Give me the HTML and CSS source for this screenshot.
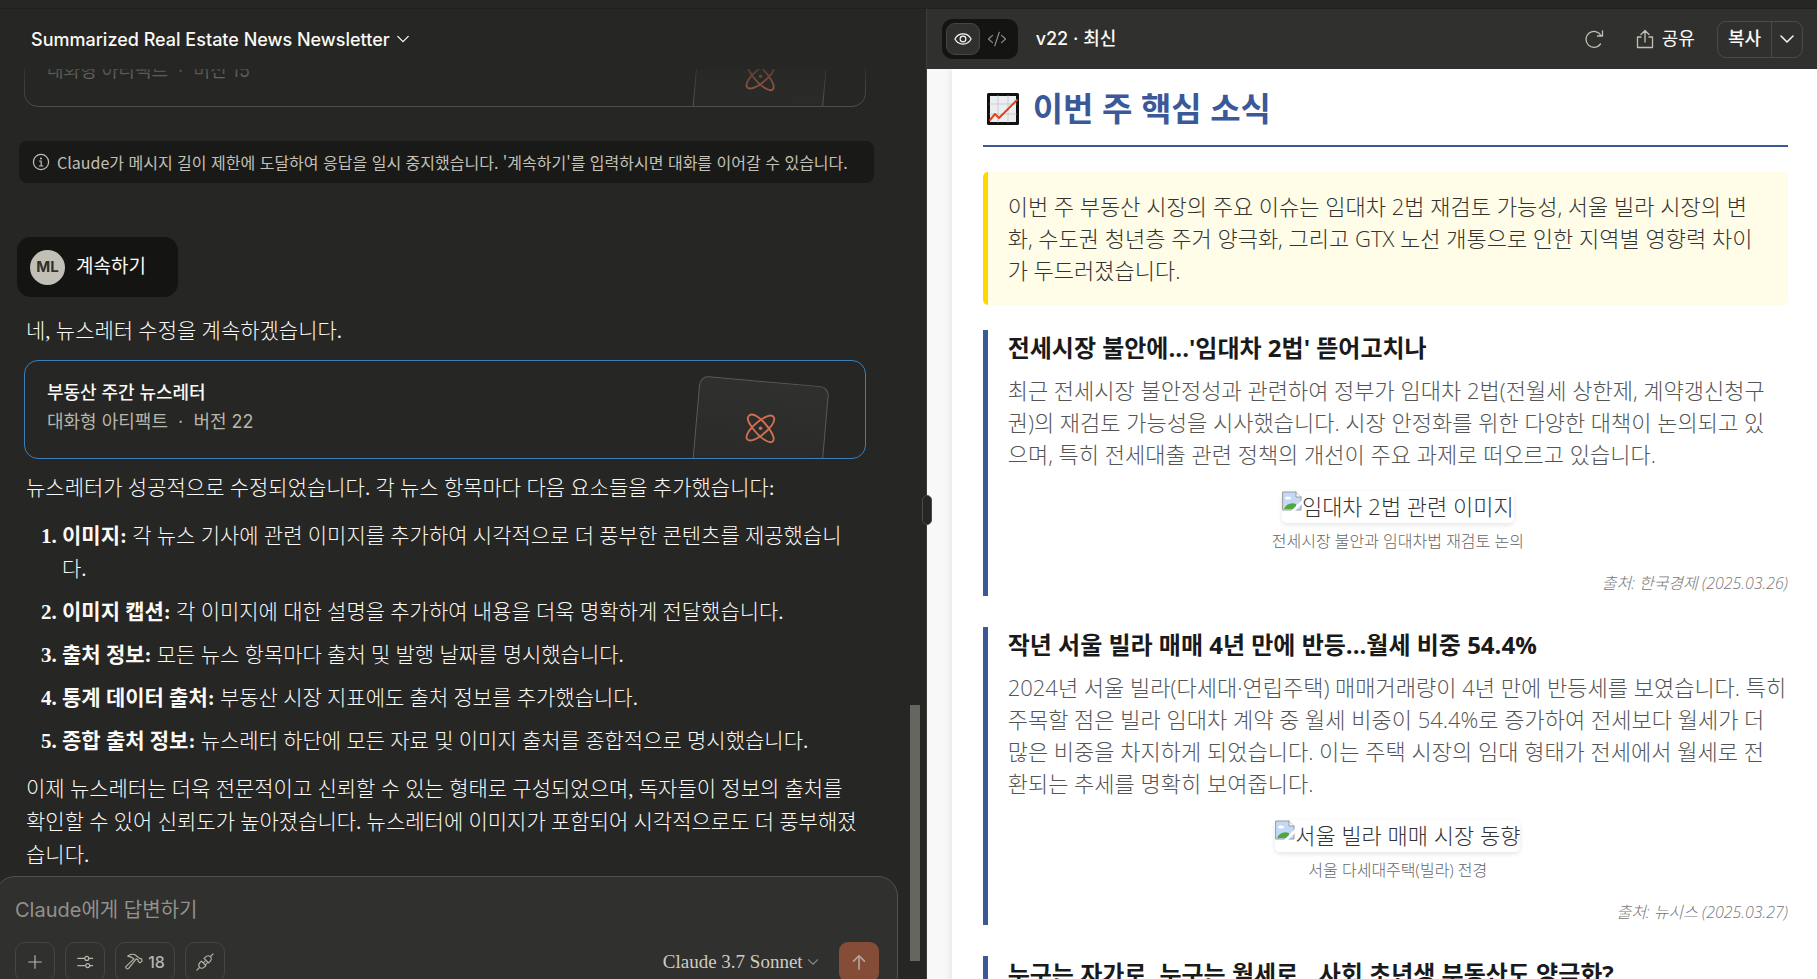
FILE: index.html
```html
<!DOCTYPE html>
<html lang="ko">
<head>
<meta charset="utf-8">
<title>Summarized Real Estate News Newsletter</title>
<link rel="stylesheet" href="styles.css">
</head>
<body>
<svg class="defs" aria-hidden="true">
  <symbol id="chevron" viewBox="0 0 16 16"><path d="M2 5l6 6 6-6" fill="none" stroke="currentColor" stroke-width="1.5" stroke-linecap="round" stroke-linejoin="round"/></symbol>
  <symbol id="atom" viewBox="0 0 34 34"><g fill="none" stroke="currentColor" stroke-width="2"><path d="M5 3.500C9 0 18 7 24 15s9 14 5.500 16.500S16 27 10 19 1.500 6.500 5 3.500z"/><path d="M31 5.500c2.500 4-4 12.500-12 18.500S4.500 32 2.500 28.500 6 16.500 14 10.500 28.500 1.500 31 5.500z"/></g><circle cx="17" cy="17.200" r="1.900" fill="currentColor"/></symbol>
  <symbol id="broken" viewBox="0 0 20 20"><path d="M1 1h13l5 5v13H1z" fill="#c3d9f7" stroke="#9a9a9a"/><path d="M14 1v5h5" fill="#fff" stroke="#9a9a9a"/><ellipse cx="6" cy="7" rx="3" ry="1.6" fill="#fff"/><path d="M2 18c2-5 7-7 12-5v5z" fill="#4fa83d"/><path d="M9 20L20 9v4l-7 7z" fill="#fff"/></symbol>
</svg>
<div class="app">
  <section class="chat">
    <header class="chat-header">
      <button class="title-button" type="button">Summarized Real Estate News Newsletter
        <svg class="chevron"><use href="#chevron"/></svg>
      </button>
    </header>
    <main class="messages">
      <article class="artifact artifact-scrolled">
        <div class="artifact-text"><span>대화형 아티팩트 &nbsp;·&nbsp; 버전 15</span></div>
        <div class="artifact-thumb"><svg><use href="#atom"/></svg></div>
      </article>
      <div class="notice">
        <svg viewBox="0 0 18 18"><circle cx="9" cy="9" r="7.6" fill="none" stroke="currentColor" stroke-width="1.2"/><path d="M7.5 8H9.2v5M7.3 13h3.6" fill="none" stroke="currentColor" stroke-width="1.2"/><circle cx="9" cy="5.4" r="1" fill="currentColor"/></svg>
        <p>Claude가 메시지 길이 제한에 도달하여 응답을 일시 중지했습니다. '계속하기'를 입력하시면 대화를 이어갈 수 있습니다.</p>
      </div>
      <div class="user-message"><span class="avatar">ML</span><span>계속하기</span></div>
      <div class="reply">
        <p>네, 뉴스레터 수정을 계속하겠습니다.</p>
        <article class="artifact artifact-active">
          <div class="artifact-text"><strong>부동산 주간 뉴스레터</strong><span>대화형 아티팩트 &nbsp;·&nbsp; 버전 22</span></div>
          <div class="artifact-thumb"><svg><use href="#atom"/></svg></div>
        </article>
        <p>뉴스레터가 성공적으로 수정되었습니다. 각 뉴스 항목마다 다음 요소들을 추가했습니다:</p>
        <ol>
          <li><b>이미지:</b> 각 뉴스 기사에 관련 이미지를 추가하여 시각적으로 더 풍부한 콘텐츠를 제공했습니<br>다.</li>
          <li><b>이미지 캡션:</b> 각 이미지에 대한 설명을 추가하여 내용을 더욱 명확하게 전달했습니다.</li>
          <li><b>출처 정보:</b> 모든 뉴스 항목마다 출처 및 발행 날짜를 명시했습니다.</li>
          <li><b>통계 데이터 출처:</b> 부동산 시장 지표에도 출처 정보를 추가했습니다.</li>
          <li><b>종합 출처 정보:</b> 뉴스레터 하단에 모든 자료 및 이미지 출처를 종합적으로 명시했습니다.</li>
        </ol>
        <p>이제 뉴스레터는 더욱 전문적이고 신뢰할 수 있는 형태로 구성되었으며, 독자들이 정보의 출처를<br>확인할 수 있어 신뢰도가 높아졌습니다. 뉴스레터에 이미지가 포함되어 시각적으로도 더 풍부해졌<br>습니다.</p>
      </div>
    </main>
    <form class="composer">
      <input type="text" placeholder="Claude에게 답변하기" aria-label="Claude에게 답변하기">
      <div class="composer-row">
        <button class="tool" type="button" aria-label="추가"><svg viewBox="0 0 20 20"><path d="M10 3v14M3 10h14"/></svg></button>
        <button class="tool" type="button" aria-label="설정"><svg viewBox="0 0 20 20"><path d="M2 6h9M15 6h3.500M2 14h8.500M15 14h3.500"/><circle cx="12" cy="6" r="2.200" fill="#30302e"/><circle cx="13" cy="14" r="2.200" fill="#30302e"/></svg></button>
        <button class="tool tool-wide" type="button"><svg viewBox="0 0 20 20"><path d="M3 3.500c3-2.500 7-2.500 9.500-.5l3.500 3 2.500.5.500 2.500-2.500 2-2-2v-1.500l-2-1-8.500 10.500c-1.500 1.500-4-.5-2.800-2.200L10 6.500C8 4.800 6 4 3 3.500z"/></svg>18</button>
        <button class="tool" type="button" aria-label="연결"><svg viewBox="0 0 20 20"><path d="M1 19l3-3M16 4l3-3M4 16c-1.500-2-1-4 .5-5.500L6 9l5 5-1.500 1.500C8 17 5.500 17.500 4 16zM9 6l5 5 1.500-1.500C17 8 17.500 5.500 16 4c-2-1.500-4-1-5.500.5zM8 11l2-2M10.500 13l2-2"/></svg></button>
        <button class="model" type="button">Claude 3.7 Sonnet <svg class="chevron"><use href="#chevron"/></svg></button>
        <button class="send" type="submit" aria-label="보내기"><svg viewBox="0 0 20 20"><path d="M10 18V3M4 9l6-6 6 6"/></svg></button>
      </div>
    </form>
    <div class="scroll-thumb"></div>
    <div class="resize-handle"></div>
  </section>

  <section class="preview">
    <header class="toolbar">
      <div class="view-switch">
        <button class="active" type="button" aria-label="미리보기"><svg viewBox="0 0 20 20"><path d="M1 10c4-7.500 14-7.500 18 0-4 7.500-14 7.500-18 0z"/><circle cx="10" cy="10" r="3.200"/></svg></button>
        <button type="button" aria-label="코드"><svg viewBox="0 0 20 20"><path d="M5 6l-4.500 4L5 14M15 6l4.500 4-4.500 4M12.500 2.500l-5 15"/></svg></button>
      </div>
      <span class="version">v22 · 최신</span>
      <button class="icon-button" type="button" aria-label="새로고침"><svg viewBox="0 0 20 20"><path d="M17 6.500A8 8 0 1 0 16.500 15M18.500 2v5h-5"/></svg></button>
      <button class="share" type="button"><svg viewBox="0 0 18 20"><path d="M5 8H1.500v10.500h15V8H13M9 13V1.500M5 5.500l4-4 4 4"/></svg>공유</button>
      <div class="copy-group">
        <button type="button">복사</button>
        <button type="button" class="copy-more" aria-label="더 보기"><svg class="chevron"><use href="#chevron"/></svg></button>
      </div>
    </header>
    <div class="page">
      <div class="document">
        <h2><svg viewBox="0 0 32 32" aria-hidden="true"><path d="M1.500 1.500h29v29h-29z" fill="#eceff1" stroke="#111" stroke-width="3"/><path d="M11 3v26M21 3v26M3 11h26M3 21h26" stroke="#c9cdd0" stroke-width="1"/><path d="M3 27l5-6 4 4L30 7" fill="none" stroke="#e8401c" stroke-width="2"/></svg>이번 주 핵심 소식</h2>
        <p class="summary">이번 주 부동산 시장의 주요 이슈는 임대차 2법 재검토 가능성, 서울 빌라 시장의 변<br>화, 수도권 청년층 주거 양극화, 그리고 GTX 노선 개통으로 인한 지역별 영향력 차이<br>가 두드러졌습니다.</p>
        <article class="news">
          <h3>전세시장 불안에...'임대차 2법' 뜯어고치나</h3>
          <p>최근 전세시장 불안정성과 관련하여 정부가 임대차 2법(전월세 상한제, 계약갱신청구<br>권)의 재검토 가능성을 시사했습니다. 시장 안정화를 위한 다양한 대책이 논의되고 있<br>으며, 특히 전세대출 관련 정책의 개선이 주요 과제로 떠오르고 있습니다.</p>
          <figure><div class="image"><svg><use href="#broken"/></svg>임대차 2법 관련 이미지</div><figcaption>전세시장 불안과 임대차법 재검토 논의</figcaption></figure>
          <p class="source">출처: 한국경제 (2025.03.26)</p>
        </article>
        <article class="news">
          <h3>작년 서울 빌라 매매 4년 만에 반등...월세 비중 54.4%</h3>
          <p>2024년 서울 빌라(다세대·연립주택) 매매거래량이 4년 만에 반등세를 보였습니다. 특히<br>주목할 점은 빌라 임대차 계약 중 월세 비중이 54.4%로 증가하여 전세보다 월세가 더<br>많은 비중을 차지하게 되었습니다. 이는 주택 시장의 임대 형태가 전세에서 월세로 전<br>환되는 추세를 명확히 보여줍니다.</p>
          <figure><div class="image"><svg><use href="#broken"/></svg>서울 빌라 매매 시장 동향</div><figcaption>서울 다세대주택(빌라) 전경</figcaption></figure>
          <p class="source">출처: 뉴시스 (2025.03.27)</p>
        </article>
        <article class="news">
          <h3>누구는 자가로, 누구는 월세로...사회 초년생 부동산도 양극화?</h3>
        </article>
      </div>
    </div>
  </section>
</div>
</body>
</html>
```
FILE: styles.css
```css
* { box-sizing: border-box; }

body {
  margin: 0;
  background: #262624;
  color: #faf9f5;
  font-family: Inter, "Noto Sans CJK KR", sans-serif;
  font-size: 18px;
}

h2, h3, p, ol, figure { margin: 0; }

button, input {
  margin: 0;
  padding: 0;
  border: 0;
  background: none;
  color: inherit;
  font: inherit;
}

svg {
  flex: none;
  fill: none;
  stroke-linecap: round;
  stroke-linejoin: round;
}

.defs { position: absolute; width: 0; height: 0; }
.chevron { width: 14px; height: 14px; }

.app {
  display: grid;
  grid-template-columns: 51fr 49fr;
  height: 100vh;
  padding-top: 8px;
  overflow: hidden;
}

/* Conversation */
.chat {
  position: relative;
  display: flex;
  flex-direction: column;
  min-width: 0;
  min-height: 0;
  border-top: 1px solid #20201e;
  border-right: 1px solid #3c3c39;
}

.chat-header {
  display: flex;
  align-items: center;
  flex: none;
  height: 60px;
  padding: 0 31px;
}

.title-button {
  display: flex;
  align-items: center;
  gap: 6px;
  font-weight: 500;
  white-space: nowrap;
}

.messages {
  position: relative;
  display: flex;
  flex: 1;
  flex-direction: column;
  justify-content: flex-end;
  min-height: 0;
  padding: 0 52px 4px 17px;
  overflow: hidden;
}

.messages::before {
  content: "";
  position: absolute;
  z-index: 1;
  inset: 0 0 auto;
  height: 40px;
  background: linear-gradient(#262624bb, #26262400);
}

.artifact {
  display: flex;
  flex: none;
  justify-content: space-between;
  height: 99px;
  margin: 0 8px 0 7px;
  padding: 0 41px 0 22px;
  border: 1px solid #50504c;
  border-radius: 14px;
  font-family: Inter, "Noto Sans CJK KR", sans-serif;
  font-size: 18px;
  line-height: 29px;
  overflow: hidden;
}

.artifact-active { border-color: #3a7fbd; }

.artifact-text {
  display: flex;
  flex-direction: column;
  padding-top: 17px;
}

.artifact-scrolled .artifact-text { padding-top: 47px; }

.artifact-text strong { font-weight: 500; }
.artifact-text span { color: #b8b5a9; }

.artifact-thumb {
  display: flex;
  flex: none;
  justify-content: center;
  width: 130px;
  height: 130px;
  margin-top: 20px;
  padding-top: 30px;
  border: 1px solid #5a5a56;
  border-radius: 9px;
  background: linear-gradient(#30302e, #262624);
  transform: rotate(5deg);
}

.artifact-thumb svg {
  width: 32px;
  height: 32px;
  color: #cf6f50;
  transform: rotate(-5deg);
}

.notice {
  display: flex;
  align-items: center;
  flex: none;
  gap: 7px;
  height: 42px;
  margin: 34px 0 54px 2px;
  padding: 0 13px;
  border-radius: 8px;
  background: #191917;
  color: #c2c0b6;
  font-family: "Noto Sans CJK KR", sans-serif;
  font-size: 16px;
  line-height: 22px;
  white-space: nowrap;
}

.notice svg { width: 18px; height: 18px; }

.user-message {
  display: flex;
  align-items: center;
  align-self: flex-start;
  flex: none;
  gap: 11px;
  height: 60px;
  padding: 0 32px 0 13px;
  border-radius: 14px;
  background: #141413;
  font-size: 19px;
  line-height: 24px;
}

.avatar {
  display: grid;
  place-items: center;
  width: 35px;
  height: 35px;
  border-radius: 50%;
  background: #c2c0b6;
  color: #30302e;
  font-size: 15px;
  font-weight: 700;
}

.reply {
  flex: none;
  padding-top: 18px;
  font-family: "Liberation Serif", "Noto Sans CJK KR", serif;
  font-size: 21px;
  font-weight: 300;
  line-height: 33px;
}

.reply > p { padding-left: 9px; white-space: nowrap; }
.reply .artifact { margin-top: 12px; margin-bottom: 13px; font-weight: 400; }

.reply ol {
  display: flex;
  flex-direction: column;
  gap: 10px;
  margin: 15px 0;
  padding-left: 45px;
}

.reply li { white-space: nowrap; }
.reply li::marker { font-weight: 700; }
.reply b { font-weight: 700; }

.composer {
  display: flex;
  flex: none;
  flex-direction: column;
  gap: 16px;
  margin: 0 28px -16px -5px;
  padding: 17px 18px 12px 19px;
  border: 1px solid #51514d;
  border-radius: 20px;
  background: #30302e;
}

.composer input {
  height: 32px;
  outline: 0;
  font-size: 20px;
}

.composer input::placeholder { color: #91918b; opacity: 1; }

.composer-row { display: flex; gap: 10px; }

.tool {
  display: flex;
  align-items: center;
  justify-content: center;
  gap: 5px;
  width: 40px;
  height: 40px;
  border: 1px solid #454541;
  border-radius: 10px;
  color: #b8b5a9;
  font-size: 16px;
  font-weight: 500;
}

.tool-wide { width: 60px; }

.tool svg, .send svg, .toolbar svg {
  width: 18px;
  height: 18px;
  stroke: currentColor;
  stroke-width: 1.3;
}

.model {
  display: flex;
  align-items: center;
  gap: 4px;
  margin: 0 10px 0 auto;
  color: #cfccc0;
  font-family: "Liberation Serif", serif;
  font-size: 19px;
}

.model .chevron { width: 12px; height: 12px; color: #85837b; }

.send {
  display: grid;
  place-items: center;
  width: 40px;
  height: 40px;
  border-radius: 9px;
  background: #854c38;
  color: #b5a79f;
}

.send svg { stroke-width: 1.8; }

.scroll-thumb {
  position: absolute;
  right: 6px;
  bottom: 18px;
  width: 10px;
  height: 256px;
  background: #666660;
}

.resize-handle {
  position: absolute;
  z-index: 2;
  top: 486px;
  right: -6px;
  width: 10px;
  height: 30px;
  border: 1px solid #4a4a46;
  border-radius: 5px;
  background: #262624;
}

/* Artifact preview */
.preview {
  display: flex;
  flex-direction: column;
  min-width: 0;
  min-height: 0;
  overflow: hidden;
}

.toolbar {
  display: flex;
  align-items: center;
  flex: none;
  height: 61px;
  padding: 0 14px 0 15px;
  border-top: 1px solid #20201e;
  background: #30302e;
  line-height: 24px;
}

.view-switch {
  display: flex;
  align-items: center;
  height: 40px;
  padding: 0 4px;
  border-radius: 10px;
  background: #141413;
}

.view-switch button {
  display: grid;
  place-items: center;
  width: 34px;
  height: 32px;
  border: 1px solid transparent;
  border-radius: 9px;
  color: #8f8d85;
}

.view-switch .active {
  border-color: #454541;
  background: #30302e;
  color: #faf9f5;
}

.version { margin: 0 auto 0 18px; font-weight: 500; }

.icon-button { display: grid; color: #c2c0b6; }

.toolbar .icon-button svg { width: 20px; height: 20px; }

.share {
  display: flex;
  align-items: center;
  gap: 8px;
  margin: 0 22px 0 32px;
}

.toolbar .share svg { height: 20px; color: #c2c0b6; }

.copy-group {
  display: flex;
  height: 37px;
  border: 1px solid #4b4b47;
  border-radius: 9px;
}

.copy-group button { padding: 0 10px; font-weight: 500; }
.copy-group .copy-more { display: grid; place-items: center; padding: 0 7px; border-left: 1px solid #4b4b47; }
.toolbar .copy-more svg { width: 16px; height: 16px; }

.page {
  flex: 1;
  min-height: 0;
  padding-left: 25px;
  background: #f8f8f8;
  color: #333;
  font-family: "Open Sans", "Noto Sans CJK KR", sans-serif;
  font-size: 22px;
  font-weight: 300;
  line-height: 32px;
  overflow: hidden;
}

.document {
  min-height: 100%;
  padding: 16px 29px 0 31px;
  background: #fff;
  box-shadow: 0 0 8px #0000001a;
}

.document h2 {
  display: flex;
  align-items: center;
  gap: 14px;
  padding: 0 0 12px 4px;
  margin-bottom: 25px;
  border-bottom: 2px solid #3b5998;
  color: #3b5998;
  font-size: 33px;
  font-weight: 700;
  line-height: 48px;
}

.document h2 svg { width: 32px; height: 32px; }
.document p { white-space: nowrap; }

.summary {
  margin-bottom: 25px;
  padding: 18px 20px 19px;
  border-left: 5px solid #ffd700;
  border-radius: 5px;
  background: #fffde7;
}

.news {
  margin-bottom: 31px;
  padding-left: 20px;
  border-left: 5px solid #3b5998;
}

.news h3 {
  margin-bottom: 8px;
  color: #1a1a1a;
  font-size: 24px;
  font-weight: 700;
  line-height: 36px;
  white-space: nowrap;
}

.news p { color: #555; }

.news figure {
  display: flex;
  flex-direction: column;
  align-items: center;
  gap: 5px;
  margin-top: 21px;
}

.image {
  display: flex;
  height: 32px;
  border-radius: 5px;
  box-shadow: 0 2px 5px #0000001a;
  color: #333;
  line-height: 30px;
}

.image svg { width: 20px; height: 20px; }

figcaption {
  color: #666;
  font-size: 16px;
  line-height: 26px;
}

.news .source {
  margin-top: 17px;
  color: #777;
  font-size: 16px;
  font-style: italic;
  line-height: 25px;
  text-align: right;
}
```
